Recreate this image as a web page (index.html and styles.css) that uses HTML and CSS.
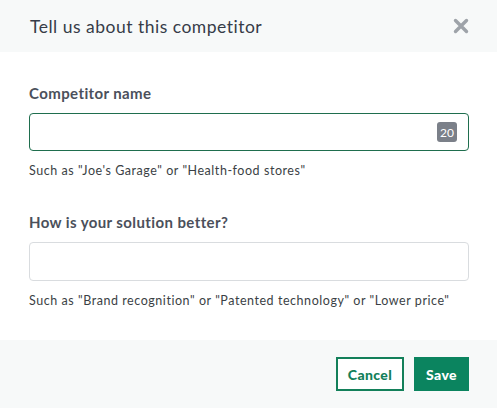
FILE: index.html
```html
<!DOCTYPE html>
<html>
<head>
<meta charset="utf-8">
<link rel="stylesheet" href="styles.css">
</head>
<body>
<div class="modal">
  <header class="modal-header">
    <h1 class="title">Tell us about this competitor</h1>
    <button class="close" aria-label="Close">
      <svg width="16" height="16" viewBox="0 0 16 16"><path d="M2.5 2.5 L13.5 13.5 M13.5 2.5 L2.5 13.5" stroke="#9ea3a9" stroke-width="3.4" stroke-linecap="round"/></svg>
    </button>
  </header>
  <main class="modal-body">
    <div class="field">
      <label class="label">Competitor name</label>
      <div class="input focused">
        <span class="counter">20</span>
      </div>
      <p class="help">Such as "Joe's Garage" or "Health-food stores"</p>
    </div>
    <div class="field">
      <label class="label">How is your solution better?</label>
      <div class="input"></div>
      <p class="help">Such as "Brand recognition" or "Patented technology" or "Lower price"</p>
    </div>
  </main>
  <footer class="modal-footer">
    <button class="btn btn-outline">Cancel</button>
    <button class="btn btn-solid">Save</button>
  </footer>
</div>
</body>
</html>
```
FILE: styles.css
```css
* { box-sizing: border-box; }
html, body { margin: 0; padding: 0; background: #fff; }
body { font-family: Lato, "Noto Sans", sans-serif; color: #3c4250; }
.modal { width: 497px; height: 408px; display: flex; flex-direction: column; }
.modal-header {
  height: 52px; background: #f7f9f9;
  display: flex; align-items: center; justify-content: space-between;
  padding: 0 28px 0 30px;
}
.title { margin: 0; font-size: 17.5px; font-weight: 400; color: #363c48; letter-spacing: 0.5px; padding-top: 1px; }
.close { border: 0; background: none; padding: 0; width: 16px; height: 16px; display: flex; }
.modal-body { flex: 1; padding: 32px 28px 0 29px; display: flex; flex-direction: column; gap: 35px; }
.field { display: flex; flex-direction: column; }
.label { font-size: 15px; font-weight: 700; color: #4b505b; line-height: 18px; margin-bottom: 11px; letter-spacing: 0.4px; }
.input {
  height: 39px; width: 440px; border: 1px solid #d9dcdf; border-radius: 4px;
  display: flex; align-items: center; justify-content: flex-end; padding-right: 11px;
}
.input.focused { height: 38px; border-color: #1f6e4e; }
.counter {
  background: #7b8089; color: #fff; font-size: 12px; border-radius: 3px;
  width: 20px; height: 20px; display: flex; align-items: center; justify-content: center;
}
.help { margin: 13px 0 0; font-size: 12.5px; color: #3b3f45; line-height: 14px; letter-spacing: 0.55px; }
.modal-footer {
  height: 68px; background: #f7f9f9;
  display: flex; justify-content: flex-end; align-items: center; gap: 10px;
  padding: 0 28px 0 0;
}
.btn {
  font-family: Lato, "Noto Sans", sans-serif; font-size: 14px; font-weight: 900;
  height: 34px; border-radius: 0; cursor: pointer; padding: 0; letter-spacing: 0.4px;
}
.btn-outline { width: 68px; background: #fff; color: #13805a; border: 2px solid #13805a; }
.btn-solid { width: 55px; background: #0b845f; color: #fff; border: 2px solid #0b845f; }
```
